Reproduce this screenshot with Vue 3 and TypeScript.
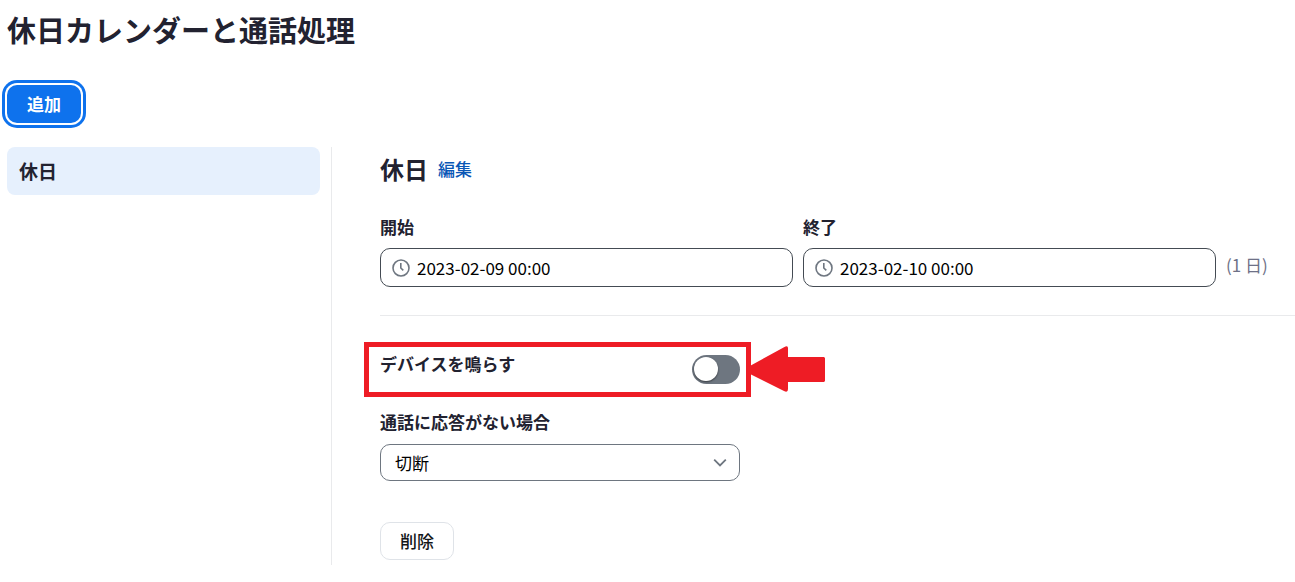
<script setup lang="ts">
import { ref } from 'vue'

interface DateField {
  id: string
  label: string
  value: string
}

const fields = ref<DateField[]>([
  { id: 'start', label: '開始', value: '2023-02-09 00:00' },
  { id: 'end', label: '終了', value: '2023-02-10 00:00' },
])
const ringDevices = ref(false)
const action = ref('切断')
</script>

<template>
  <div class="page">
    <h1>休日カレンダーと通話処理</h1>
    <button type="button" class="add">追加</button>
    <div class="columns">
      <nav class="side">
        <a href="#holiday" class="side-item">休日</a>
      </nav>
      <main id="holiday" class="detail">
        <div class="heading">
          <h2>休日</h2>
          <a href="#edit">編集</a>
        </div>
        <div class="dates">
          <div v-for="f in fields" :key="f.id" class="field">
            <label :for="f.id">{{ f.label }}</label>
            <div class="input-box">
              <svg width="18" height="18" viewBox="0 0 18 18" fill="none" stroke="#6e7680" stroke-width="1.6" aria-hidden="true">
                <circle cx="9" cy="9" r="8" />
                <path d="M8.8 4V9L11.3 11.3" />
              </svg>
              <input :id="f.id" v-model="f.value" type="text" />
            </div>
          </div>
          <span class="days">(1 日)</span>
        </div>
        <section class="handling">
          <div class="ring">
            <label for="ring">デバイスを鳴らす</label>
            <input id="ring" v-model="ringDevices" type="checkbox" class="switch" />
            <div class="callout"></div>
            <svg class="arrow" width="78" height="46" viewBox="0 0 78 46" aria-hidden="true">
              <path d="M0 21L36 1.2Q40 -1 40 2V11H76L77 12V35L76 36H40V43Q40 47 36 45L0 27Z" fill="#ee1c25" />
            </svg>
          </div>
          <div class="field unanswered">
            <label for="action">通話に応答がない場合</label>
            <div class="select-box">
              <select id="action" v-model="action">
                <option>切断</option>
              </select>
              <svg class="chevron" width="14" height="10" viewBox="0 0 14 10" fill="none" stroke="#6e7680" stroke-width="1.8" aria-hidden="true">
                <path d="M1.2 1.7L7 7.5L12.8 1.7" />
              </svg>
            </div>
          </div>
          <button type="button" class="delete">削除</button>
        </section>
      </main>
    </div>
  </div>
</template>

<style>
body {
  margin: 0;
  background: #fff;
}
</style>

<style scoped>
.page,
.page button,
.page input,
.page select {
  font-family: "Noto Sans CJK JP", "Noto Sans", sans-serif;
  font-size: 17px;
  line-height: 24px;
  color: #222230;
  box-sizing: border-box;
}
.page {
  padding: 8px 0 0 7px;
}
h1,
h2 {
  margin: 0;
  font-weight: 700;
}
h1 {
  font-size: 29px;
  line-height: 42px;
}
.page .add {
  display: block;
  margin-top: 35px;
  height: 38px;
  padding: 0 20px;
  border: 0;
  border-radius: 10px;
  background: #0e72ed;
  color: #fff;
  font-weight: 700;
  box-shadow: 0 0 0 2px #fff, 0 0 0 5px #0e72ed;
}
.columns {
  display: flex;
  margin-top: 24px;
}
.side {
  flex: none;
  width: 325px;
  padding-right: 11px;
  border-right: 1px solid #e9eaec;
  box-sizing: border-box;
}
.side-item {
  display: block;
  padding: 12px;
  border-radius: 8px;
  background: #e6f0fd;
  color: #222230;
  font-size: 19px;
  font-weight: 700;
  text-decoration: none;
}
.detail {
  flex: 1;
  min-width: 0;
  padding: 0 0 5px 48px;
}
.heading {
  display: flex;
  align-items: center;
  gap: 10px;
}
h2 {
  font-size: 24px;
  line-height: 44px;
}
.heading a {
  color: #0956b5;
  font-weight: 500;
  text-decoration: none;
}
.dates {
  display: flex;
  align-items: flex-end;
  gap: 10px;
  padding: 24px 0 28px;
  border-bottom: 1px solid #e9eaec;
}
.dates .field {
  flex: 1;
  min-width: 0;
}
label {
  display: block;
  font-weight: 700;
}
.input-box {
  display: flex;
  align-items: center;
  gap: 7px;
  height: 39px;
  margin-top: 9px;
  padding: 0 11px;
  border: 1px solid #444b53;
  border-radius: 10px;
  box-sizing: border-box;
}
.input-box svg {
  flex: none;
}
.page .input-box input {
  flex: 1;
  min-width: 0;
  padding: 0;
  border: 0;
  outline: 0;
  background: none;
  color: #000;
}
.days {
  flex: none;
  width: 69px;
  padding-bottom: 10px;
  color: #6e7187;
}
.handling {
  max-width: 360px;
}
.ring {
  position: relative;
  display: flex;
  justify-content: space-between;
  align-items: flex-start;
  padding-top: 36px;
}
.switch {
  appearance: none;
  flex: none;
  width: 48px;
  height: 29px;
  margin: 3px 0 0;
  border-radius: 15px;
  background: #6e7680;
}
.switch::before {
  content: "";
  display: block;
  width: 24px;
  height: 24px;
  margin: 2px;
  border-radius: 50%;
  background: #fff;
  box-shadow: 0 1px 2px rgba(0, 0, 0, 0.5);
}
.switch:checked {
  background: #0e72ed;
}
.switch:checked::before {
  margin-left: 22px;
}
.callout {
  position: absolute;
  inset: 26px -11px -13px -16px;
  border: 5px solid #ee1c25;
  pointer-events: none;
}
.arrow {
  position: absolute;
  left: calc(100% + 8px);
  bottom: -8px;
}
.unanswered {
  margin-top: 26px;
}
.select-box {
  position: relative;
  margin-top: 10px;
}
.page .select-box select {
  display: block;
  appearance: none;
  width: 100%;
  height: 37px;
  padding: 0 40px 0 14px;
  border: 1px solid #6e7680;
  border-radius: 10px;
  background: #fff;
  color: #000;
}
.chevron {
  position: absolute;
  right: 13px;
  top: 14px;
  pointer-events: none;
}
.page .delete {
  display: block;
  height: 38px;
  margin-top: 41px;
  padding: 0 19px;
  border: 1px solid #dfe3e8;
  border-radius: 10px;
  background: #fff;
  color: #131619;
  font-weight: 500;
}
</style>
